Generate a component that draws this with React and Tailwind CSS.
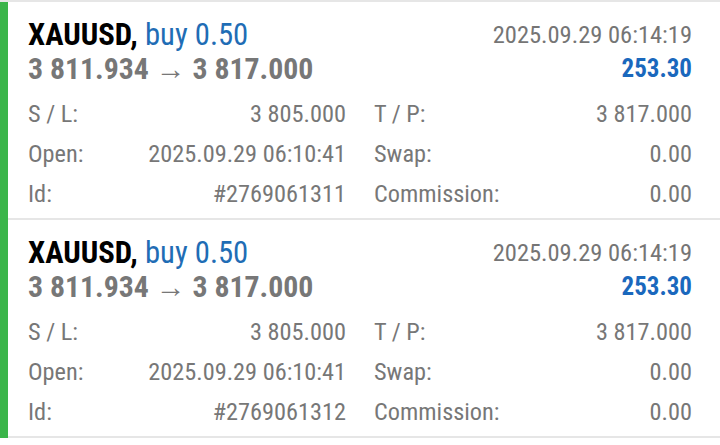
import React from 'react';

const positions = [
  { id: '#2769061311' },
  { id: '#2769061312' },
];

function Row({ label, value, label2, value2 }) {
  return (
    <div className="grid grid-cols-2 gap-7 h-10 items-center">
      <div className="flex justify-between whitespace-nowrap">
        <span>{label}</span>
        <span>{value}</span>
      </div>
      <div className="flex justify-between whitespace-nowrap">
        <span>{label2}</span>
        <span>{value2}</span>
      </div>
    </div>
  );
}

function PositionCard({ id }) {
  return (
    <div className="border-b-2 border-[#e6e6e6] pl-5 pr-[28px] pt-4 pb-1">
      <div className="flex justify-between items-start">
        <div className="whitespace-nowrap">
          <div className="text-[30.7px] leading-[34px] font-bold text-black">
            XAUUSD, <span className="font-normal text-[#1f6db5]">buy 0.50</span>
          </div>
          <div className="text-[29.8px] leading-[34px] font-bold text-[#777]">
            3 811.934 → 3 817.000
          </div>
        </div>
        <div className="text-right whitespace-nowrap">
          <div className="text-[24.5px] leading-[34px] text-[#757575]">2025.09.29 06:14:19</div>
          <div className="text-[25px] leading-[34px] font-bold text-[#1a68bd]">253.30</div>
        </div>
      </div>
      <div className="text-[24.3px] text-[#777] mt-2">
        <Row label="S / L:" value="3 805.000" label2="T / P:" value2="3 817.000" />
        <Row label="Open:" value="2025.09.29 06:10:41" label2="Swap:" value2="0.00" />
        <Row label="Id:" value={id} label2="Commission:" value2="0.00" />
      </div>
    </div>
  );
}

export default function App() {
  return (
    <div
      className="w-[720px] h-[445px] overflow-hidden bg-white font-stretch-condensed"
      style={{ fontFamily: 'Roboto, "Liberation Sans", sans-serif' }}
    >
      <div className="flex border-t-2 border-[#e6e6e6]">
        <div className="w-2 bg-[#3bb54a] shrink-0" />
        <div className="flex-1">
          {positions.map(p => (
            <PositionCard key={p.id} id={p.id} />
          ))}
        </div>
      </div>
    </div>
  );
}
